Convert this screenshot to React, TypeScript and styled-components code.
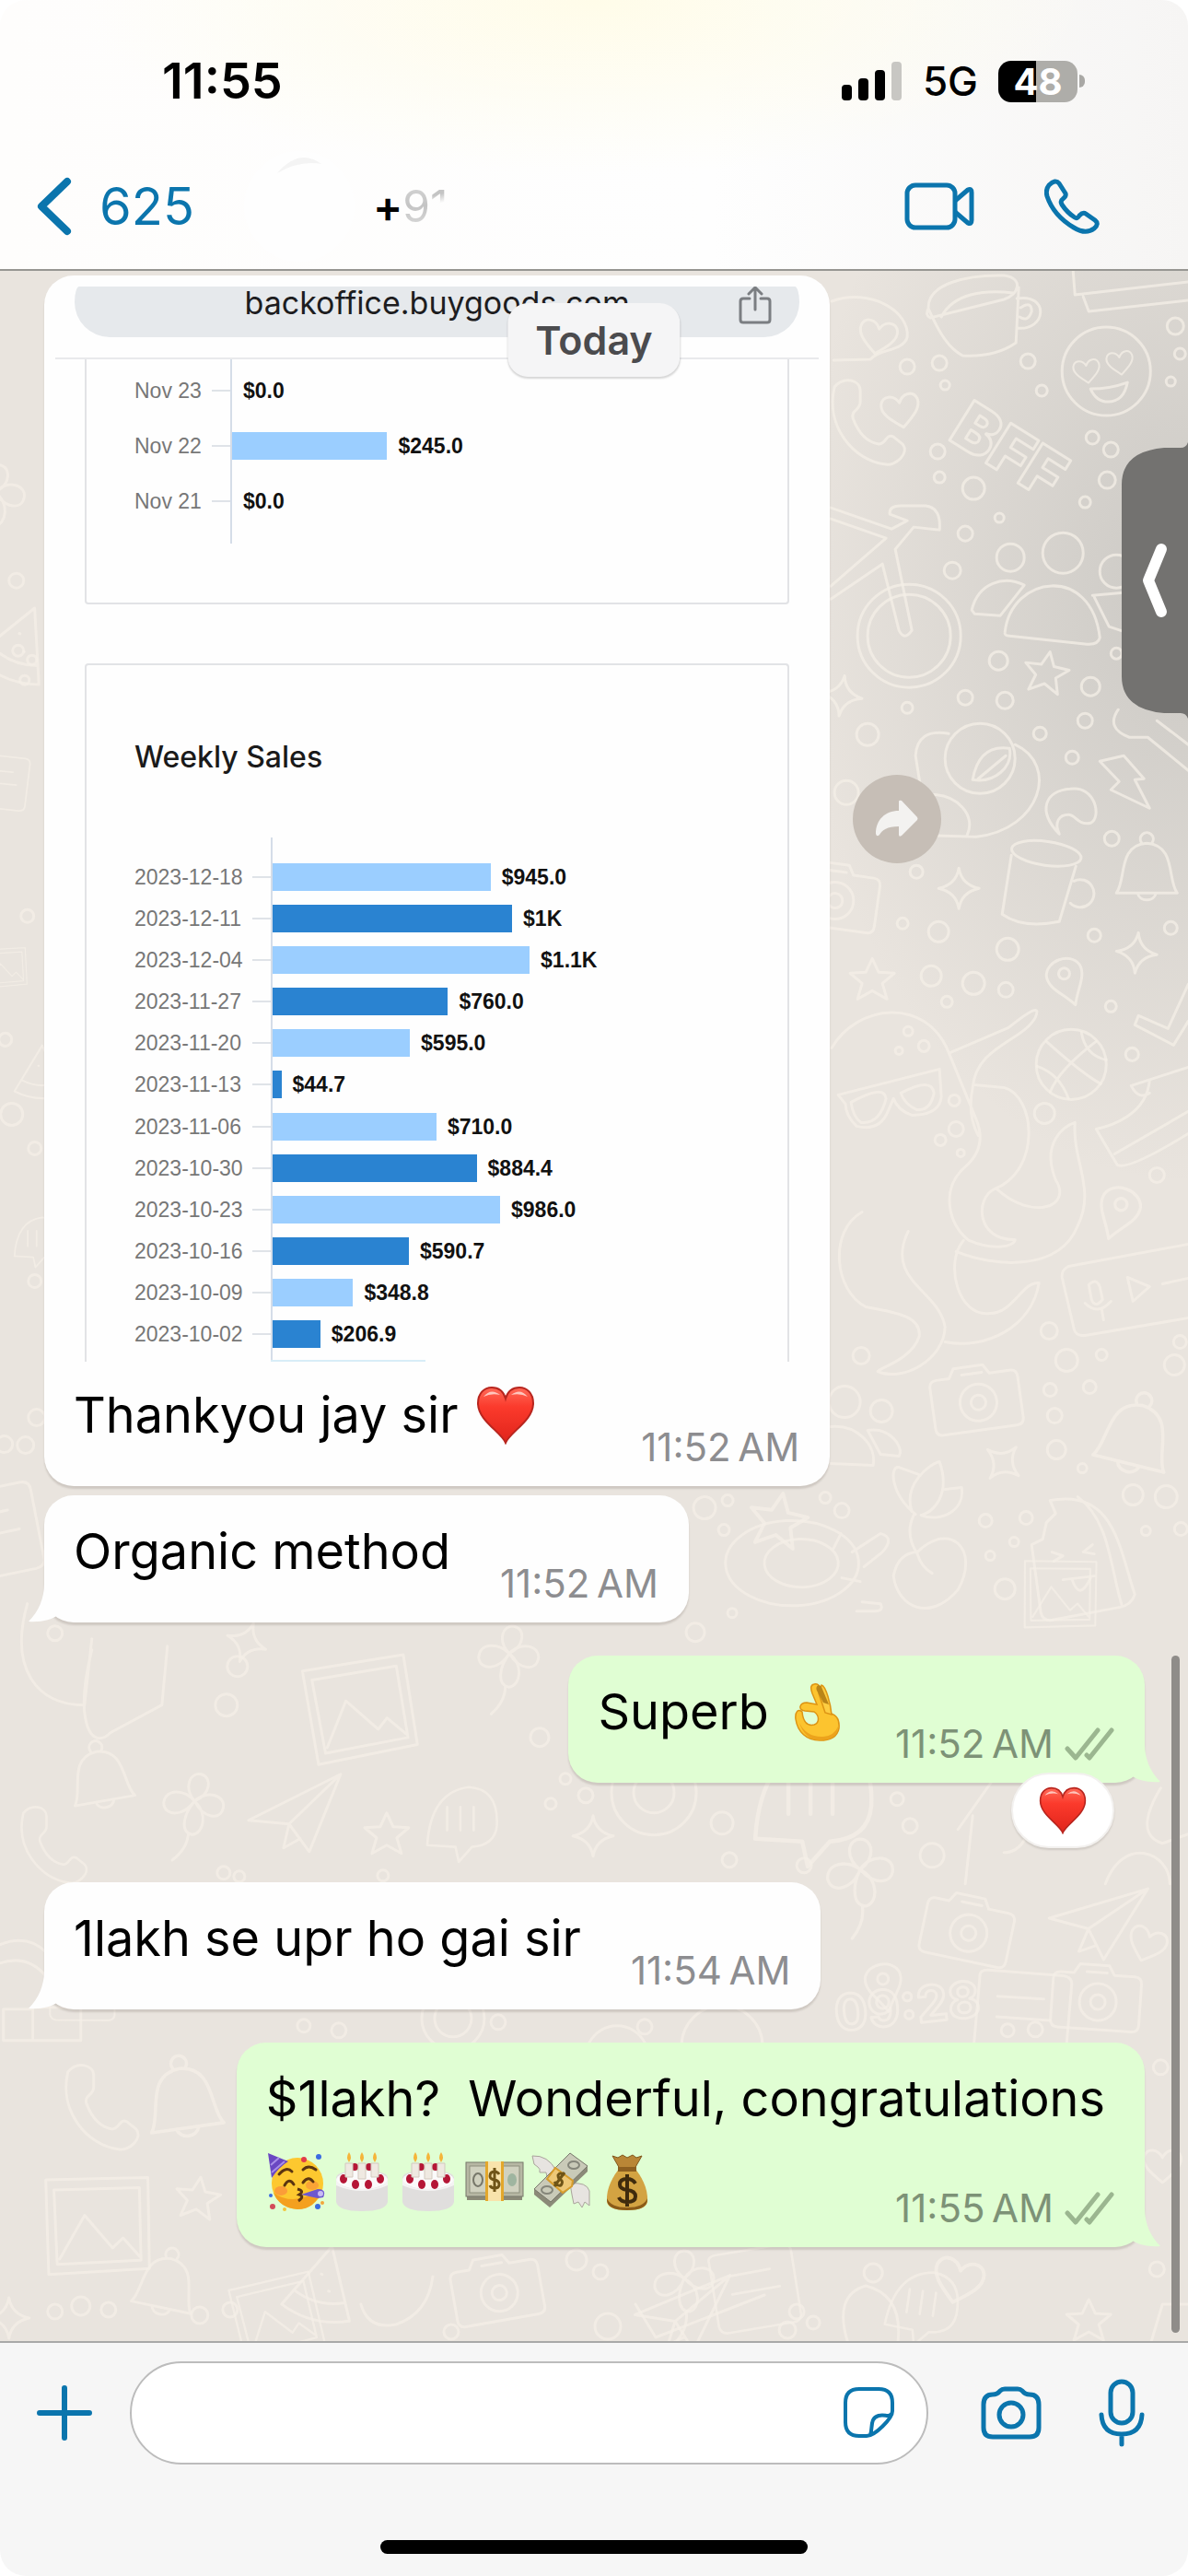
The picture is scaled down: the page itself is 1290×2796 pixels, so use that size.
import React, { useState } from 'react';
import styled, { createGlobalStyle } from 'styled-components';

const GlobalStyle = createGlobalStyle`
  * {
    box-sizing: border-box;
  }
  body {
    margin: 0;
    background: #fff;
    font-family: Inter, 'Liberation Sans', sans-serif;
  }
  button {
    padding: 0;
    border: 0;
    background: none;
    font: inherit;
    color: inherit;
    cursor: pointer;
  }
  svg {
    display: block;
    flex: none;
  }
`;

const accent = '#0b75ad';

const Screen = styled.div`
  min-height: 100vh;
  display: flex;
  flex-direction: column;
  border-radius: 28px;
  overflow: hidden;
`;

const Header = styled.header`
  position: relative;
  z-index: 2;
  border-bottom: 2px solid #979692;
  background: radial-gradient(ellipse 560px 190px at 50% 0, #fffce9, rgba(255, 252, 233, 0)),
    linear-gradient(90deg, #fefdfc 0%, #fefefe 60%, #f6f5f4 100%);
`;
const StatusBar = styled.div`
  display: flex;
  align-items: center;
  justify-content: space-between;
  padding: 56px 112px 36px 176px;
`;
const Clock = styled.time`
  font-size: 54px;
  line-height: 64px;
  font-weight: 600;
  color: #000;
`;
const StatusIcons = styled.div`
  display: flex;
  align-items: center;
  gap: 22px;
`;
const Network = styled.span`
  font-size: 44px;
  line-height: 48px;
  font-weight: 500;
`;
const Battery = styled.div`
  display: flex;
  align-items: center;
  gap: 2px;
  &:after {
    content: '';
    width: 6px;
    height: 14px;
    border-radius: 0 6px 6px 0;
    background: #a9a8a5;
  }
`;
const BatteryLevel = styled.span`
  width: 86px;
  height: 45px;
  border-radius: 14px;
  background: linear-gradient(90deg, #000 48%, #aeada9 48%);
  color: #fff;
  font-size: 40px;
  line-height: 45px;
  font-weight: 700;
  text-align: center;
`;

const NavBar = styled.nav`
  display: flex;
  align-items: center;
  height: 136px;
  padding: 0 96px 0 40px;
`;
const BackButton = styled.button`
  display: flex;
  align-items: center;
  gap: 30px;
  color: ${accent};
  font-size: 56px;
  line-height: 64px;
`;
const Avatar = styled.div`
  width: 120px;
  height: 120px;
  margin: 0 20px 0 54px;
  border-radius: 50%;
  background: #fefefe;
`;
const Contact = styled.h1`
  flex: 1;
  margin: 0;
  font-size: 48px;
  line-height: 56px;
  font-weight: 600;
`;
const Faded = styled.span<{ $gradient: string }>`
  font-weight: 400;
  color: transparent;
  background: ${({ $gradient }) => $gradient};
  background-clip: text;
`;
const NavActions = styled.div`
  display: flex;
  align-items: center;
  gap: 76px;
  color: ${accent};
`;

const Chat = styled.main`
  position: relative;
  flex: 1;
  display: flex;
  flex-direction: column;
  padding: 5px 47px 100px 48px;
  background: radial-gradient(ellipse 430px 640px at 100% 350px, rgba(150, 152, 150, 0.36), rgba(150, 152, 150, 0)),
    #e9e4de;
`;
const Wallpaper = styled.svg`
  position: absolute;
  top: 0;
  left: 0;
  width: 100%;
  height: 100%;
  fill: none;
  stroke: #f4efe7;
  stroke-opacity: 0.75;
  stroke-width: 3;
  stroke-linecap: round;
  stroke-linejoin: round;
`;
const DateBadge = styled.div`
  position: absolute;
  z-index: 2;
  top: 35px;
  left: 50%;
  transform: translateX(-50%);
  padding: 16px 30px;
  border-radius: 22px;
  background: #f5f5f6;
  box-shadow: 0 2px 2px rgba(0, 0, 0, 0.16);
  color: #4b4b4e;
  font-size: 43px;
  line-height: 48px;
  font-weight: 600;
`;

const Bubble = styled.article<{ $mine?: boolean; $gap?: number }>`
  position: relative;
  align-self: ${({ $mine }) => ($mine ? 'flex-end' : 'flex-start')};
  margin-top: ${({ $gap = 36 }) => $gap}px;
  border-radius: 32px;
  background: ${({ $mine }) => ($mine ? '#e0fed3' : '#fefefe')};
  box-shadow: 0 3px 2px rgba(60, 50, 40, 0.15);
`;
const PhotoBubble = styled(Bubble)`
  width: 71.4%;
`;
const Tail = styled.svg<{ $mine?: boolean }>`
  position: absolute;
  bottom: 0;
  ${({ $mine }) => ($mine ? 'right: -17px; transform: scaleX(-1);' : 'left: -17px;')}
  fill: ${({ $mine }) => ($mine ? '#e0fed3' : '#fefefe')};
`;
const Body = styled.div`
  display: flex;
  justify-content: space-between;
  gap: 54px;
  padding: 29px 33px 18px 32px;
`;
const Caption = styled(Body)`
  padding-top: 0;
`;
const Text = styled.p`
  display: flex;
  align-items: center;
  gap: 4px;
  align-self: flex-start;
  margin: 0 0 27px;
  color: #000;
  font-size: 54px;
  line-height: 64px;
  white-space: pre-wrap;
`;
const LongText = styled(Text)`
  margin: 0;
  padding: 29px 43px 0 32px;
`;
const EmojiLine = styled.div`
  display: flex;
  align-items: center;
  gap: 8px;
  padding: 26px 0 21px;
`;
const Meta = styled.div<{ $mine?: boolean }>`
  display: flex;
  align-items: center;
  align-self: flex-end;
  gap: 12px;
  color: ${({ $mine }) => ($mine ? '#7d9277' : '#8d8d90')};
  font-size: 42px;
  line-height: 48px;
  white-space: nowrap;
`;
const Reaction = styled.button`
  position: absolute;
  right: 33px;
  bottom: -71px;
  width: 112px;
  height: 82px;
  display: flex;
  align-items: center;
  justify-content: center;
  border: 2px solid #f3f1ef;
  border-radius: 41px;
  background: #fff;
  box-shadow: 0 2px 2px rgba(60, 50, 40, 0.14);
`;
const ForwardButton = styled.button`
  position: absolute;
  left: calc(100% + 25px);
  top: 542px;
  width: 96px;
  height: 96px;
  display: flex;
  align-items: center;
  justify-content: center;
  border-radius: 50%;
  background: #c6beb6;
`;
const SideTab = styled.button`
  position: absolute;
  right: 0;
  top: 186px;
  width: 72px;
  height: 300px;
`;
const ScrollThumb = styled.div`
  position: absolute;
  right: 9px;
  bottom: 9px;
  width: 9px;
  height: 735px;
  border-radius: 5px;
  background: #8f8c89;
`;

const Photo = styled.figure`
  margin: 0 12px 26px;
  padding-top: 12px;
`;
const UrlRow = styled.div`
  display: flex;
  align-items: flex-start;
  height: 55px;
  margin: 0 21px 22px;
  padding: 0 30px;
  border-radius: 5px 5px 38px 38px / 17px 17px 38px 38px;
  background: #e6e9ec;
`;
const Url = styled.span`
  flex: 1;
  padding-left: 36px;
  text-align: center;
  color: #1d1d1f;
  font-size: 34px;
  line-height: 36px;
`;
const Cards = styled.div`
  display: flex;
  flex-direction: column;
  gap: 64px;
  padding: 0 32px;
  border-top: 2px solid #e9eaec;
`;
const Card = styled.section<{ $cut: 'top' | 'bottom' }>`
  padding: ${({ $cut }) => ($cut === 'top' ? '0 0 64px' : '80px 0 0')};
  border: 2px solid #e2e3e6;
  ${({ $cut }) => ($cut === 'top' ? 'border-top: 0; border-radius: 0 0 4px 4px;' : 'border-bottom: 0; border-radius: 4px 4px 0 0;')}
`;
const CardTitle = styled.h2`
  margin: 0 0 67px 52px;
  color: #1a1a1a;
  font-size: 32px;
  line-height: 40px;
  font-weight: 500;
`;
const AxisStub = styled.div<{ $left: number; $height: number }>`
  margin-left: ${({ $left }) => $left}px;
  height: ${({ $height }) => $height}px;
  border-left: 2px solid #d5dde8;
`;
const Rows = styled.div<{ $height: number }>`
  display: grid;
  grid-auto-rows: 1fr;
  height: ${({ $height }) => $height}px;
  padding-left: 52px;
  font-family: 'Liberation Sans', Arial, sans-serif;
  font-size: 23px;
  line-height: 30px;
`;
const Row = styled.div`
  display: flex;
  align-items: center;
`;
const RowLabel = styled.span<{ $width: number }>`
  width: ${({ $width }) => $width}px;
  color: #777;
`;
const Tick = styled.span`
  width: 20px;
  height: 2px;
  background: #dfe3e8;
`;
const Plot = styled.div`
  flex: 1;
  align-self: stretch;
  display: flex;
  align-items: center;
  gap: 12px;
  border-left: 2px solid #d5dde8;
`;
const Bar = styled.div<{ $dark?: boolean }>`
  height: 30px;
  background: ${({ $dark }) => ($dark ? '#2a83d1' : '#9bceff')};
`;
const Amount = styled.strong`
  color: #111;
`;
const NextBar = styled.div`
  width: 168px;
  height: 2px;
  margin-left: 200px;
  background: #d8edf7;
`;

const Footer = styled.footer`
  border-top: 2px solid #a9a9a8;
  background: #f6f6f6;
`;
const Composer = styled.form`
  display: flex;
  align-items: center;
  padding: 20px 47px 0 40px;
  color: ${accent};
`;
const Field = styled.div`
  flex: 1;
  min-width: 0;
  display: flex;
  align-items: center;
  height: 112px;
  margin: 0 57px 0 41px;
  padding: 0 34px 0 44px;
  border: 2px solid #bcbcbc;
  border-radius: 56px;
  background: #fff;
`;
const MessageInput = styled.input`
  flex: 1;
  min-width: 0;
  border: 0;
  outline: 0;
  background: none;
  font: inherit;
  font-size: 54px;
`;
const ComposerActions = styled.div`
  display: flex;
  align-items: center;
  gap: 62px;
`;
const HomeIndicator = styled.div`
  width: 36%;
  height: 15px;
  margin: 82px auto 24px;
  border-radius: 8px;
  background: #000;
`;

const dailySales = [
  { label: 'Nov 23', amount: 0, text: '$0.0' },
  { label: 'Nov 22', amount: 245, text: '$245.0' },
  { label: 'Nov 21', amount: 0, text: '$0.0' },
];

const weeklySales = [
  { label: '2023-12-18', amount: 945, text: '$945.0' },
  { label: '2023-12-11', amount: 1038, text: '$1K' },
  { label: '2023-12-04', amount: 1114, text: '$1.1K' },
  { label: '2023-11-27', amount: 760, text: '$760.0' },
  { label: '2023-11-20', amount: 595, text: '$595.0' },
  { label: '2023-11-13', amount: 38, text: '$44.7' },
  { label: '2023-11-06', amount: 710, text: '$710.0' },
  { label: '2023-10-30', amount: 884.4, text: '$884.4' },
  { label: '2023-10-23', amount: 986, text: '$986.0' },
  { label: '2023-10-16', amount: 590.7, text: '$590.7' },
  { label: '2023-10-09', amount: 348.8, text: '$348.8' },
  { label: '2023-10-02', amount: 206.9, text: '$206.9' },
];

const bubbles = [
  [985, 398, 8], [1020, 394, 8], [1026, 418, 5], [1116, 392, 8], [1131, 424, 6], [1276, 354, 9], [1281, 384, 6],
  [1271, 414, 5], [1018, 490, 8], [1020, 518, 6], [1057, 530, 12], [1186, 475, 7], [1206, 488, 8], [1202, 521, 9],
  [1178, 545, 6], [1085, 562, 5], [1048, 579, 8], [1034, 619, 9], [1084, 717, 10], [1048, 757, 8], [1091, 760, 9],
  [1184, 745, 10], [1212, 709, 6], [985, 768, 6], [942, 797, 12], [1129, 796, 7], [1178, 782, 8], [1164, 822, 7],
  [919, 860, 13], [1207, 910, 8], [995, 946, 7], [1271, 1007, 7], [1188, 1015, 7], [980, 1002, 6], [1019, 1011, 11],
  [1094, 1030, 12], [1011, 1059, 11], [1057, 1067, 12], [1092, 1074, 8], [1028, 1087, 6], [1206, 1092, 6],
  [1229, 1144, 7], [986, 1119, 5], [1003, 1135, 6], [976, 1140, 4], [1036, 1194, 6], [1038, 1225, 8],
  [1021, 1237, 6], [1043, 1251, 4], [1134, 1208, 11], [1256, 1275, 8], [935, 1471, 9], [1139, 1444, 9],
  [1158, 1476, 12], [1196, 1470, 6], [1281, 1456, 7], [1275, 1481, 11], [1140, 1508, 7], [1183, 1505, 7],
  [1145, 1536, 8], [1147, 1573, 10], [1175, 1593, 5], [1230, 1622, 11], [1266, 1624, 12], [1244, 1661, 5],
  [1282, 1659, 7], [1070, 1650, 7], [1114, 1647, 7], [1101, 1673, 5], [1075, 1688, 5], [1091, 1724, 11],
  [896, 1625, 6], [914, 1639, 8], [765, 1636, 12], [790, 1628, 6], [786, 1660, 6], [795, 1750, 5], [18, 630, 8],
  [20, 706, 6], [35, 716, 5], [27, 738, 5], [30, 994, 7], [6, 1128, 7], [13, 1209, 12], [38, 1246, 7], [38, 1390, 7],
  [40, 1538, 9], [5, 1567, 9], [28, 1568, 9], [60, 1772, 8], [258, 1808, 11], [246, 1850, 12], [755, 1771, 10],
  [586, 1885, 10], [598, 1957, 6], [614, 1930, 6], [636, 1948, 8], [784, 1978, 12], [974, 1952, 7], [988, 1981, 8],
  [792, 2018, 8], [873, 2024, 8], [1012, 2013, 13], [243, 2032, 7], [260, 2036, 6], [416, 2035, 6], [330, 2198, 7],
  [368, 2203, 8], [541, 2194, 8], [700, 2199, 8], [1094, 2203, 7], [1124, 2202, 8], [1260, 2243, 8], [626, 2452, 11],
  [652, 2465, 8], [865, 2508, 8], [948, 2466, 10], [1256, 2462, 8], [60, 2508, 8], [88, 2502, 10], [118, 2506, 8],
  [217, 2512, 9], [250, 2506, 8], [490, 2530, 8], [660, 2524, 14], [855, 2528, 9], [883, 2520, 7],
];

const sparklePath = 'M0 -22 Q3 -4 22 0 Q3 4 0 22 Q-3 4 -22 0 Q-3 -4 0 -22Z';
const starPath = 'M0 -23 L7 -8 L24 -7 L11 4 L16 21 L0 12 L-16 21 L-11 4 L-24 -7 L-7 -8Z';
const heartPath = 'M0 18 C-12 8 -22 0 -20 -10 C-17 -20 -5 -19 0 -9 C5 -19 17 -20 20 -10 C22 0 12 8 0 18Z';
const bellPath =
  'M-33 24 C-22 10 -32 -28 0 -30 C32 -28 22 10 33 24 Z M-10 24 C-8 34 8 34 10 24 M-6 -31 A7 7 0 1 1 6 -31';
const cameraPath =
  'M-48 -20 Q-48 -28 -40 -28 L-26 -28 L-20 -38 L12 -38 L18 -28 L40 -28 Q48 -28 48 -20 L48 24 Q48 32 40 32 L-40 32 Q-48 32 -48 24Z M-18 2 a20 20 0 1 0 40 0 a20 20 0 1 0 -40 0 M-6 2 a8 8 0 1 0 16 0 a8 8 0 1 0 -16 0 M-12 -30 h22';
const pinPath = 'M0 28 C-8 12 -22 2 -19 -12 C-14 -28 14 -28 19 -12 C22 2 8 12 0 28Z M-6 -8 a6 6 0 1 0 12 0 a6 6 0 1 0 -12 0';
const phonePath =
  'M-36 -42 C-26 -54 -8 -50 -8 -38 L-8 -26 C-8 -16 -18 -18 -16 -8 C-10 8 0 18 12 20 C20 20 20 8 28 12 L38 20 C46 30 30 44 20 42 C-16 38 -46 0 -36 -42Z';
const framePath = 'M-60 -44 L50 -58 L62 40 L-46 58Z M-50 -34 L42 -46 L52 32 L-38 46Z M-36 40 L-14 -10 L20 22 L30 10 L50 28';
const notePath = 'M-52 -38 Q-54 -46 -44 -47 L38 -52 Q48 -52 48 -42 L52 34 Q52 42 42 43 L-38 48 Q-46 48 -48 40Z M-30 -20 L20 -24 M-28 2 L30 -2';
const flowerPath =
  'M0 -6 C-16 -18 -12 -36 0 -36 C12 -36 16 -18 0 -6 C10 -22 32 -20 32 -6 C32 8 14 10 0 -6 C18 4 18 26 6 30 C-8 30 -8 10 0 -6 C-8 14 -28 18 -32 4 C-34 -12 -14 -16 0 -6 M2 30 C4 42 0 52 -8 62';
const palmPath = 'M-40 30 Q-36 -34 10 -40 Q46 -38 44 6 Q42 30 14 32 L-2 50 L-6 32Z M-16 -16 V12 M0 -16 V12 M16 -16 V12';
const planePath = 'M-50 10 L50 -40 L16 44 L-6 14Z M-6 14 L50 -40 M-6 14 L-12 40 L6 30';
const trianglePath = 'M0 -44 L38 30 Q0 46 -38 30Z M-28 12 Q0 24 28 12 M-4 -12 h1 M8 4 h1';

const stickers: [string, number, number, number?, number?][] = [
  [heartPath, 953, 366, 10], [heartPath, 978, 446, -10], [heartPath, 1180, 403, -8, 0.7], [heartPath, 1216, 394, -8, 0.7],
  [phonePath, 942, 462], [sparklePath, 914, 755, 8], [starPath, 1136, 730, 10], [sparklePath, 1041, 964],
  [bellPath, 1245, 945], [cameraPath, 905, 975, 8], [starPath, 947, 1063], [pinPath, 1158, 1064, -20],
  [sparklePath, 1234, 1034, 5], [pinPath, 1214, 1315, 20, 1.1], [cameraPath, 1060, 1520, -8], [bellPath, 1232, 1560, 14, 1.2],
  [sparklePath, 1089, 1587, 40], [starPath, 845, 1650, 10, 1.3], [notePath, -8, 1665, -8], [framePath, 390, 1855, -2],
  [flowerPath, 552, 1800, 10], [palmPath, 880, 1950, 0, 1.5], [sparklePath, 644, 1992], [flowerPath, 934, 2035, 0, 1.1],
  [phonePath, 58, 2005, 0, 0.9], [trianglePath, 1180, 1850, 10], [cameraPath, 1190, 2170, 4], [notePath, 1110, 2190, 8],
  [notePath, 90, 2160, 4, 0.7], [bellPath, 200, 2280, -8, 1.2], [phonePath, 110, 2290], [framePath, 105, 2415, 6],
  [starPath, 215, 2385, 8], [cameraPath, 540, 2486, -10], [flowerPath, 743, 2478], [trianglePath, 350, 2480, 14],
  [planePath, 740, 2505, 4], [heartPath, 1040, 2475, 14, 1.3], [starPath, 1182, 2518], [notePath, 820, 2485, -6, 0.9],
  [palmPath, 1000, 2500, 8, 0.9], [framePath, 300, 2515, -6, 0.8], [bellPath, 180, 2480, 12], [sparklePath, 10, 2515],
  [trianglePath, 20, 700, 24], [notePath, 0, 850, 10, 0.6], [flowerPath, -6, 540, 10], [framePath, 6, 1050, 4, 0.4],
  [trianglePath, 44, 1165, 4, 0.7], [palmPath, 40, 1345, 0, 0.6], [sparklePath, 268, 1782, 20], [bellPath, 110, 1930, -10],
  [planePath, 320, 1965], [palmPath, 500, 1975, 0, 0.9], [starPath, 420, 1990], [flowerPath, 210, 1960, 14],
  [cameraPath, 1050, 2095, 12], [pinPath, 960, 2155, -10], [planePath, 1190, 2080, 10], [heartPath, 1262, 2350],
  [framePath, 1150, 1730, 8, 0.7], [heartPath, 1245, 2110, 20],
];

const Doodles = () => (
  <Wallpaper viewBox="0 294 1290 2246" preserveAspectRatio="xMidYMin slice" aria-hidden="true">
    {bubbles.map(([x, y, r]) => (
      <circle key={`${x}-${y}`} cx={x} cy={y} r={r} />
    ))}
    {stickers.map(([d, x, y, rotate = 0, scale = 1]) => (
      <path key={`${x}-${y}`} d={d} transform={`translate(${x} ${y}) rotate(${rotate}) scale(${scale})`} />
    ))}
    {/* peach, cup, love face */}
    <path d="M903 327 C945 312 988 338 985 366 C980 382 955 378 945 390 L905 391" />
    <path d="M1008 335 C1006 308 1050 298 1090 299 C1112 302 1106 320 1090 325 L1010 345 Q1004 342 1008 335 C1020 362 1030 378 1045 386 Q1080 388 1103 372 L1106 312 M1022 344 C1035 318 1070 314 1100 318 M1104 324 C1140 318 1136 360 1104 356 M1108 334 q12 -8 12 4 q-4 12 -13 6" />
    <circle cx="1201" cy="403" r="48" />
    <path d="M1184 422 Q1205 422 1224 415 Q1220 436 1203 436 Q1190 436 1184 422Z M1165 294 L1167 320 L1290 306 M1176 322 L1182 338 L1290 326" />
    <g fontFamily="Inter, sans-serif" fontWeight="900" fontSize="70">
      <text transform="translate(1028 476) rotate(32)">BFF</text>
    </g>
    {/* bicycle */}
    <circle cx="987" cy="690" r="56" />
    <circle cx="987" cy="690" r="45" />
    <path d="M902 551 L968 574 L985 565 L966 558 Q965 548 980 549 L1005 549 Q1022 551 1020 575 L992 572 L972 596 L990 684 Q982 696 976 684 L958 612 L902 650 M902 563 L962 584 L902 636" />
    {/* friends */}
    <circle cx="1097" cy="605" r="15" />
    <circle cx="1154" cy="600" r="22" />
    <circle cx="1212" cy="620" r="18" />
    <path d="M1091 686 C1098 624 1185 612 1194 692 Q1192 700 1180 699 L1096 690 Q1090 690 1091 686Z M1055 662 C1062 632 1090 624 1112 635 L1086 668 L1058 666Z M1186 646 L1220 643 M1188 648 L1204 680 L1222 686" />
    {/* duck with cap */}
    <circle cx="1064" cy="823" r="38" />
    <path d="M1030 796 Q996 790 994 820 L1000 858 M1102 808 C1150 830 1130 900 1060 908 L990 906 M1010 862 C1040 862 1060 885 1050 906 M1056 846 C1062 812 1082 810 1096 812 C1100 832 1080 850 1056 846Z M1062 845 L1092 820" />
    <path d="M1194 826 L1220 820 L1242 845 L1232 846 L1248 877 L1206 857 L1215 848Z M1150 905 C1126 880 1134 858 1162 856 C1190 852 1196 888 1184 893 C1170 896 1168 884 1160 884 C1150 884 1144 892 1150 905Z" />
    <ellipse cx="1136" cy="926" rx="38" ry="13" transform="rotate(8 1136 926)" />
    <path d="M1098 928 L1088 992 Q1110 1008 1150 1000 L1168 940 M1166 956 a15 15 0 1 1 -4 24 M1214 770 Q1200 790 1226 800 L1246 800 L1290 836 M1256 782 L1290 808" />
    {/* octopus in glasses */}
    <path d="M903 1137 C930 1090 1005 1080 1030 1142 L1060 1215 Q1072 1245 1048 1266 C1020 1290 1030 1330 1052 1346 C1080 1358 1102 1352 1102 1345 C1060 1346 1058 1300 1080 1290 C1130 1270 1125 1190 1090 1180 L1058 1177 M1032 1142 L1095 1115 C1120 1095 1130 1090 1124 1104 C1110 1130 1060 1135 1056 1180 Q1050 1210 1062 1232 M1082 1290 C1120 1325 1165 1310 1146 1280 C1130 1240 1155 1222 1167 1218 C1164 1260 1190 1290 1170 1330 C1150 1380 1080 1375 1038 1358 M1046 1346 C1025 1370 1040 1430 1075 1425 C1100 1425 1110 1390 1128 1392 C1120 1440 1070 1465 1026 1456 M936 1315 C900 1335 905 1400 940 1418 C980 1425 1000 1430 998 1450 C990 1475 955 1484 953 1488 C980 1500 1025 1475 1026 1440 C1020 1400 960 1390 986 1336" />
    <path d="M910 1188 L1020 1160 L1022 1190 Q1020 1210 990 1210 Q975 1205 970 1192 L964 1206 Q955 1228 930 1222 Q918 1210 918 1198Z M924 1196 Q960 1176 962 1192 Q955 1220 935 1218 Q926 1212 924 1196Z M978 1186 Q1012 1168 1014 1186 Q1010 1206 995 1204 Q982 1198 978 1186Z" />
    <circle cx="1163" cy="1155" r="38" />
    <path d="M1136 1130 Q1175 1165 1195 1176 M1190 1130 Q1150 1160 1140 1185 M1174 1120 Q1178 1145 1201 1150 M1126 1157 Q1150 1165 1160 1192" />
    <path d="M1290 1158 L1228 1178 Q1236 1194 1248 1186 M1248 1172 C1245 1210 1205 1222 1190 1225 L1213 1264 Q1225 1270 1290 1230 M1210 1252 L1290 1206 M1290 1068 L1268 1116 L1236 1102 L1232 1112 L1274 1134 L1290 1108" />
    <path d="M1290 1350 L1160 1374 Q1152 1378 1153 1386 L1166 1442 Q1168 1450 1178 1449 L1290 1430 M1182 1394 q8 -8 12 2 l3 14 q-8 10 -12 0Z M1178 1414 q14 14 28 -2 M1196 1420 l2 12 M1224 1386 L1248 1396 L1230 1412Z M1262 1393 L1290 1387" />
    {/* contacts, plant, popsicle */}
    <circle cx="917" cy="1521" r="17" />
    <circle cx="957" cy="1531" r="12" />
    <path d="M902 1548 C930 1545 952 1568 948 1590 L902 1588 M942 1552 C966 1548 982 1570 976 1580 L956 1578Z" />
    <path d="M994 1643 C966 1620 966 1590 976 1592 L998 1600 M990 1640 C980 1610 1010 1588 1020 1586 C1032 1620 1015 1640 1000 1644 M1026 1616 L1044 1614 C1048 1640 1020 1652 1000 1644 M992 1644 Q982 1665 996 1686 Q1000 1700 1012 1707 M996 1684 C1030 1650 1065 1680 1040 1725 C1010 1760 975 1745 970 1710 Q975 1685 996 1684" />
    <path d="M1140 1628 C1210 1615 1215 1680 1232 1730 Q1228 1742 1215 1744 L1140 1758 Q1132 1758 1130 1750 L1120 1676 L1132 1670 L1136 1652 L1146 1642Z M1170 1624 C1205 1650 1205 1700 1218 1742 M1142 1684 l12 4 l-10 6 M1186 1676 l-10 8 l12 2 M1154 1714 L1188 1710 M1164 1714 q8 24 20 -2" />
    {/* turtle, planet, clock */}
    <path d="M860 1700 m-72 0 a72 46 0 1 0 144 -8 a72 46 0 1 0 -144 8 M830 1698 a40 26 0 1 0 80 -4 a40 26 0 1 0 -80 4 M925 1684 L956 1664 Q972 1668 958 1684 L938 1700 M936 1738 L956 1740 Q960 1748 950 1748 L930 1748 M905 1680 l8 -16 M914 1712 l20 4" />
    <path d="M30 1740 C10 1810 40 1850 92 1850 L100 1778 M100 1790 C80 1870 100 1900 120 1880 L176 1850 L182 1786" />
    <circle cx="710" cy="1945" r="46" />
    <circle cx="710" cy="1945" r="22" />
    <path d="M1040 1985 L1100 1900 C1130 1920 1130 2010 1090 2010 M1048 2044 L1056 1970 M1200 2044 C1220 1990 1270 2010 1270 2044 M1260 1940 Q1230 1990 1262 2000 L1290 1990" />
    <g fontFamily="Inter, sans-serif" fontWeight="700" fontSize="54">
      <text transform="translate(908 2204) rotate(-6)">09:28</text>
    </g>
    <circle cx="492" cy="2190" r="34" />
    <circle cx="492" cy="2190" r="20" />
    <path d="M740 2220 A44 44 0 0 1 828 2220 M640 2216 A34 34 0 0 1 700 2216 M4 2180 h32 v34 h-32Z M36 2214 h52 v-36 h-52 M0 2110 q30 -12 50 8 M0 2130 q30 -10 50 14" />
    <path d="M392 2500 Q400 2528 430 2522 Q465 2510 470 2470 M690 2500 L712 2536 L830 2490 M920 2540 Q905 2490 940 2480 Q980 2490 975 2540 M1250 2540 L1262 2500 L1290 2500" />
  </Wallpaper>
);

const Heart = ({ size = 64 }: { size?: number }) => (
  <svg width={size} height={size} viewBox="0 0 64 64" role="img" aria-label="red heart">
    <defs>
      <linearGradient id="heartFill" x1="0" y1="0" x2="0" y2="1">
        <stop offset="0" stopColor="#ff6a58" />
        <stop offset="0.35" stopColor="#fb3a2c" />
        <stop offset="1" stopColor="#e0241b" />
      </linearGradient>
    </defs>
    <path
      d="M32 62 C27 50 2 38 2 19 C2 8 9 2 17 2 C25 2 30 7 32 14 C34 7 39 2 47 2 C55 2 62 8 62 19 C62 38 37 50 32 62Z"
      fill="url(#heartFill)"
      stroke="#b8251e"
      strokeWidth="2"
    />
    <path d="M8 12 Q16 2 26 10 Q16 8 8 12Z M38 10 Q48 2 56 12 Q48 8 38 10Z" fill="#ffc6bd" />
  </svg>
);

const OkHand = () => (
  <svg width="64" height="64" viewBox="0 0 64 64" role="img" aria-label="OK hand">
    <path
      d="M30 2 C36 0 40 10 42 20 L44 33 C54 34 58 40 57 50 C55 60 46 63 36 63 C22 63 12 54 10 40 C9 32 13 28 17 32 C18 42 22 48 30 46 C36 44 36 36 30 32 L20 31 C12 30 14 22 22 22 L33 24 L28 12 C26 6 26 3 30 2Z"
      fill="#fcc42f"
      stroke="#dd9414"
      strokeWidth="1.5"
    />
    <path d="M38 3 C43 4 48 24 49 35 L42 33 L35 12Z" fill="#fdcd42" stroke="#dd9414" strokeWidth="1.5" />
    <path d="M33 9 C31 4 35 1 38 5 L46 24 L40 22Z" fill="#b98418" />
    <path d="M14 44 Q22 60 40 59 Q52 58 56 48 Q56 63 36 63 Q20 62 14 44Z" fill="#eca31c" />
  </svg>
);

const PartyFace = () => (
  <svg width="64" height="64" viewBox="0 0 64 64" role="img" aria-label="partying face">
    <circle cx="34" cy="34" r="28" fill="#fdc82f" />
    <path d="M8 44 Q30 60 60 40 Q54 62 34 62 Q14 60 8 44Z" fill="#f4a01f" />
    <ellipse cx="16" cy="42" rx="7" ry="5" fill="#f98a3c" opacity=".7" />
    <ellipse cx="50" cy="36" rx="7" ry="5" fill="#f98a3c" opacity=".6" />
    <path d="M2 1 L24 10 Q14 16 6 28Z" fill="#6a47c2" />
    <path d="M5 14 L14 6 M6 22 L20 10" stroke="#a88ee8" strokeWidth="2" />
    <path d="M14 24 Q22 15 28 21 M40 19 Q46 13 54 19 M20 36 Q25 27 30 35 M40 33 Q46 25 51 32" stroke="#5b3510" strokeWidth="3" fill="none" strokeLinecap="round" />
    <path d="M34 40 Q42 42 36 46 Q42 48 35 53" stroke="#5b3510" strokeWidth="3" fill="none" />
    <path d="M38 46 L56 40 Q66 40 62 49 L56 50 Z" fill="#6e58cf" />
    <circle cx="59" cy="45" r="3" fill="#c8bcf4" />
    <circle cx="41" cy="8" r="3" fill="#e23b4a" />
    <circle cx="57" cy="5" r="3" fill="#3b6be2" />
    <circle cx="5" cy="47" r="2" fill="#3b6be2" />
    <circle cx="7" cy="59" r="3" fill="#d24b5a" />
    <circle cx="56" cy="59" r="3" fill="#3b6be2" />
    <circle cx="61" cy="55" r="2" fill="#f2a63b" />
    <circle cx="20" cy="62" r="2" fill="#f2c63b" />
  </svg>
);

const Cake = () => (
  <svg width="64" height="64" viewBox="0 0 64 64" role="img" aria-label="birthday cake">
    <path d="M4 28 Q4 20 32 20 Q60 20 60 28 V54 Q58 64 32 64 Q6 64 4 54Z" fill="#e0dedd" />
    <ellipse cx="32" cy="30" rx="28" ry="10" fill="#fbfafa" />
    <path d="M4 30 V36 Q32 48 60 36 V30 Q56 40 32 40 Q8 40 4 30Z" fill="#f4f3f3" />
    <g fill="#b51636">
      <ellipse cx="12" cy="29" rx="4" ry="5" />
      <ellipse cx="52" cy="29" rx="4" ry="5" />
      <ellipse cx="24" cy="16" rx="4" ry="4" />
      <ellipse cx="40" cy="16" rx="4" ry="4" />
      <ellipse cx="25" cy="35" rx="4" ry="5" />
      <ellipse cx="39" cy="35" rx="4" ry="5" />
    </g>
    <path d="M14 12 h8 v15 h-8Z M28 12 h8 v17 h-8Z M42 12 h8 v15 h-8Z" fill="#efe9e1" stroke="#d3c9bf" />
    <path d="M18 0 Q22 6 18 11 Q14 6 18 0Z M32 0 Q36 6 32 11 Q28 6 32 0Z M46 0 Q50 6 46 11 Q42 6 46 0Z" fill="#f5b53a" />
  </svg>
);

const Cash = () => (
  <svg width="64" height="64" viewBox="0 0 64 64" role="img" aria-label="dollar banknote">
    <path d="M2 46 H62 V52 H2Z" fill="#8b8a78" />
    <rect x="1" y="11" width="62" height="37" fill="#b7b8a4" stroke="#77776a" />
    <rect x="5" y="15" width="54" height="29" fill="#d0d1bf" stroke="#8f907f" />
    <ellipse cx="14" cy="30" rx="5" ry="7" fill="none" stroke="#77776a" strokeWidth="2" />
    <ellipse cx="51" cy="30" rx="5" ry="7" fill="#9fb5a0" />
    <rect x="22" y="10" width="20" height="43" fill="#f8e3ab" />
    <path d="M22 10 h3 v43 h-3Z M39 10 h3 v43 h-3Z" fill="#e3a72c" />
    <path d="M37 24 Q35 21 32 21 Q27 21 27 26 Q27 29 32 30 Q37 31 37 35 Q37 39 32 39 Q28 39 27 36 M32 17 V43" stroke="#6f5417" strokeWidth="3" fill="none" />
  </svg>
);

const FlyingCash = () => (
  <svg width="64" height="64" viewBox="0 0 64 64" role="img" aria-label="money with wings">
    <path d="M1 4 Q18 3 27 20 L20 30 Q16 28 16 22 L9 22 Q10 18 7 16 L3 13Z" fill="#e7e4e0" stroke="#aaa49c" />
    <path d="M42 34 Q60 32 63 42 V58 L58 54 L55 60 L51 54 L46 56 L44 46Z" fill="#e7e4e0" stroke="#aaa49c" />
    <path d="M42 2 L61 15 L61 21 L20 60 L3 46 L3 40Z" fill="#8b8a78" />
    <path d="M42 1 L61 15 L21 54 L3 40Z" fill="#c9cab8" stroke="#77776a" />
    <ellipse cx="46" cy="14" rx="6" ry="4" fill="none" stroke="#85867a" strokeWidth="2" />
    <ellipse cx="17" cy="41" rx="6" ry="4" fill="none" stroke="#85867a" strokeWidth="2" />
    <path d="M26 17 L45 31 L44 37 L34 44 L17 29Z" fill="#eec877" stroke="#d79d2c" strokeWidth="2" />
    <path d="M36 25 Q31 21 29 25 Q29 29 32 30 Q35 32 32 36 Q28 37 25 32 M36 22 L25 37" stroke="#6f5417" strokeWidth="3" fill="none" />
  </svg>
);

const MoneyBag = () => (
  <svg width="64" height="64" viewBox="0 0 64 64" role="img" aria-label="money bag">
    <path d="M16 4 L22 6 L27 3 L32 6 L38 3 L42 6 L48 4 L40 18 H24Z" fill="#b98636" stroke="#80571c" />
    <path d="M24 17 H40 C47 26 55 38 54 54 Q52 63 32 63 Q12 63 10 54 C9 38 17 26 24 17Z" fill="#d3a342" />
    <path d="M10 50 Q14 60 32 60 Q50 60 54 50 Q55 63 32 63 Q9 63 10 50Z" fill="#8a5b18" />
    <path d="M22 16 H42 V21 H22Z" fill="#8d5f20" />
    <path d="M41 34 Q38 29 32 29 Q24 29 24 35 Q24 40 32 41 Q41 42 41 48 Q41 54 32 54 Q25 54 23 49 M32 24 V59" stroke="#3f2b0d" strokeWidth="4" fill="none" />
  </svg>
);

const DoubleCheck = () => (
  <svg width="54" height="36" viewBox="0 0 54 36" fill="none" stroke="#9bb690" strokeWidth="5" strokeLinecap="round" strokeLinejoin="round">
    <path d="M3 23 L12 33 L36 3 M24 30 L27 33 L51 3" />
  </svg>
);

const BubbleTail = ({ mine }: { mine?: boolean }) => (
  <Tail $mine={mine} width="51" height="42" viewBox="0 0 51 42">
    <path d="M17 0 C17 16 11 30 0 41 C14 42 25 39 32 34 L51 20 V0Z" />
  </Tail>
);

interface ChartProps {
  data: { label: string; amount: number; text: string }[];
  labelWidth: number;
  height: number;
  scale: number;
}

const Chart = ({ data, labelWidth, height, scale }: ChartProps) => (
  <Rows $height={height}>
    {data.map((item, index) => (
      <Row key={item.label}>
        <RowLabel $width={labelWidth}>{item.label}</RowLabel>
        <Tick />
        <Plot>
          <Bar $dark={index % 2 === 1 && data.length > 3} style={{ width: `${item.amount * scale}%` }} />
          <Amount>{item.text}</Amount>
        </Plot>
      </Row>
    ))}
  </Rows>
);

const SalesPhoto = () => (
  <Photo>
    <UrlRow>
      <Url>backoffice.buygoods.com</Url>
      <svg width="36" height="42" viewBox="0 0 36 42" fill="none" stroke="#7b7e82" strokeWidth="3" strokeLinecap="round" strokeLinejoin="round">
        <path d="M12 13 H5 Q2 13 2 16 V36 Q2 39 5 39 H31 Q34 39 34 36 V16 Q34 13 31 13 H24 M18 25 V2 M11 8 L18 1 L25 8" />
      </svg>
    </UrlRow>
    <Cards>
      <Card $cut="top">
        <AxisStub $left={156} $height={4} />
        <Chart data={dailySales} labelWidth={84} height={180} scale={0.114} />
        <AxisStub $left={156} $height={16} />
      </Card>
      <Card $cut="bottom">
        <CardTitle>Weekly Sales</CardTitle>
        <AxisStub $left={200} $height={20} />
        <Chart data={weeklySales} labelWidth={128} height={542} scale={0.0448} />
        <AxisStub $left={200} $height={5} />
        <NextBar />
      </Card>
    </Cards>
  </Photo>
);

const App = () => {
  const [message, setMessage] = useState('');

  return (
    <>
      <GlobalStyle />
      <Screen>
        <Header>
          <StatusBar>
            <Clock>11:55</Clock>
            <StatusIcons>
              <svg width="66" height="42" viewBox="0 0 66 42">
                <rect x="0" y="25" width="11" height="17" rx="4" />
                <rect x="18" y="18" width="11" height="24" rx="4" />
                <rect x="36" y="9" width="11" height="33" rx="4" />
                <rect x="54" y="0" width="11" height="42" rx="4" fill="#c8c7c3" />
              </svg>
              <Network>5G</Network>
              <Battery>
                <BatteryLevel>48</BatteryLevel>
              </Battery>
            </StatusIcons>
          </StatusBar>
          <NavBar>
            <BackButton aria-label="Back, 625 unread">
              <svg width="38" height="64" viewBox="0 0 38 64" fill="none" stroke="currentColor" strokeWidth="8" strokeLinecap="round" strokeLinejoin="round">
                <path d="M33 5 L5 32 L33 59" />
              </svg>
              625
            </BackButton>
            <Avatar>
              <svg width="120" height="120" viewBox="0 0 120 120">
                <path d="M36 24 Q60 -4 84 14 Q60 10 36 24Z" fill="#f4f4f4" />
              </svg>
            </Avatar>
            <Contact>
              +<Faded $gradient="linear-gradient(#d8d8d8, #c4c4c4 50%, #dedede)">9</Faded>
              <Faded $gradient="linear-gradient(165deg, #c4c4c4 30%, transparent 46%)">1</Faded>
            </Contact>
            <NavActions>
              <button aria-label="Video call">
                <svg width="76" height="52" viewBox="0 0 76 52" fill="none" stroke="currentColor" strokeWidth="5" strokeLinejoin="round">
                  <rect x="3" y="3" width="52" height="46" rx="9" />
                  <path d="M55 20 L69 8 Q73 6 73 11 V41 Q73 46 69 44 L55 32" />
                </svg>
              </button>
              <button aria-label="Voice call">
                <svg width="60" height="60" viewBox="0 0 60 60" fill="none" stroke="currentColor" strokeWidth="5" strokeLinejoin="round">
                  <path d="M5 7 Q12 0 16 5 L23 16 Q24 19 20 22 Q17 24 19 28 Q25 37 33 42 Q36 44 38 40 Q42 36 45 38 L55 45 Q60 49 54 54 Q45 61 32 53 Q10 40 3 19 Q1 12 5 7Z" />
                </svg>
              </button>
            </NavActions>
          </NavBar>
        </Header>

        <Chat>
          <Doodles />
          <DateBadge>Today</DateBadge>

          <PhotoBubble $gap={0}>
            <SalesPhoto />
            <Caption>
              <Text>
                Thankyou jay sir <Heart />
              </Text>
              <Meta>11:52&#8239;AM</Meta>
            </Caption>
            <ForwardButton aria-label="Forward">
              <svg width="46" height="42" viewBox="0 0 46 42" fill="#f3f2f0">
                <path d="M25 2 Q25 0 28 1 L45 19 Q46 21 45 22 L28 39 Q25 41 25 38 V29 C12 29 7 33 4 38 Q1 41 0 37 C0 22 10 12 25 12Z" />
              </svg>
            </ForwardButton>
          </PhotoBubble>

          <Bubble $gap={10}>
            <Body>
              <Text>Organic method</Text>
              <Meta>11:52&#8239;AM</Meta>
            </Body>
            <BubbleTail />
          </Bubble>

          <Bubble $mine>
            <Body>
              <Text>
                Superb <OkHand />
              </Text>
              <Meta $mine>
                11:52&#8239;AM <DoubleCheck />
              </Meta>
            </Body>
            <BubbleTail mine />
            <Reaction aria-label="Reaction">
              <Heart size={52} />
            </Reaction>
          </Bubble>

          <Bubble $gap={108}>
            <Body>
              <Text>1lakh se upr ho gai sir</Text>
              <Meta>11:54&#8239;AM</Meta>
            </Body>
            <BubbleTail />
          </Bubble>

          <Bubble $mine>
            <LongText>{'$1lakh?  Wonderful, congratulations'}</LongText>
            <Caption>
              <EmojiLine>
                <PartyFace />
                <Cake />
                <Cake />
                <Cash />
                <FlyingCash />
                <MoneyBag />
              </EmojiLine>
              <Meta $mine>
                11:55&#8239;AM <DoubleCheck />
              </Meta>
            </Caption>
            <BubbleTail mine />
          </Bubble>

          <SideTab aria-label="Open side panel">
            <svg width="72" height="300" viewBox="0 0 72 300">
              <path d="M72 0 Q70 6 64 6 H46 Q0 10 0 46 V254 Q0 290 46 294 H64 Q70 294 72 300Z" fill="#737270" />
              <path d="M43 116 L29 150 L43 184" fill="none" stroke="#fff" strokeWidth="12" strokeLinecap="round" strokeLinejoin="round" />
            </svg>
          </SideTab>
          <ScrollThumb />
        </Chat>

        <Footer>
          <Composer onSubmit={(e) => e.preventDefault()}>
            <button type="button" aria-label="Attach">
              <svg width="60" height="60" viewBox="0 0 60 60" fill="none" stroke="currentColor" strokeWidth="6" strokeLinecap="round">
                <path d="M30 3 V57 M3 30 H57" />
              </svg>
            </button>
            <Field>
              <MessageInput aria-label="Message" value={message} onChange={(e) => setMessage(e.target.value)} />
              <button type="button" aria-label="Stickers">
                <svg width="56" height="56" viewBox="0 0 56 56" fill="none" stroke="currentColor" strokeWidth="4" strokeLinejoin="round">
                  <path d="M17 2 H38 Q53 2 53 17 V26 C53 34 34 53 25 53 H17 Q2 53 2 38 V17 Q2 2 17 2Z M53 28 C48 34 46 29 38 31 C28 34 32 44 29 52" />
                </svg>
              </button>
            </Field>
            <ComposerActions>
              <button type="button" aria-label="Camera">
                <svg width="66" height="58" viewBox="0 0 66 58" fill="none" stroke="currentColor" strokeWidth="5" strokeLinejoin="round">
                  <path d="M3 20 Q3 9 13 9 Q18 9 21 5 Q23 3 26 3 H40 Q43 3 45 5 Q48 9 53 9 Q63 9 63 20 V45 Q63 55 53 55 H13 Q3 55 3 45Z" />
                  <circle cx="33" cy="31" r="13" />
                </svg>
              </button>
              <button type="button" aria-label="Voice message">
                <svg width="50" height="74" viewBox="0 0 50 74" fill="none" stroke="currentColor" strokeWidth="5" strokeLinecap="round">
                  <rect x="13" y="3" width="24" height="45" rx="12" />
                  <path d="M3 39 Q4 60 25 60 Q46 60 47 39 M25 60 V71" />
                </svg>
              </button>
            </ComposerActions>
          </Composer>
          <HomeIndicator />
        </Footer>
      </Screen>
    </>
  );
};

export default App;
